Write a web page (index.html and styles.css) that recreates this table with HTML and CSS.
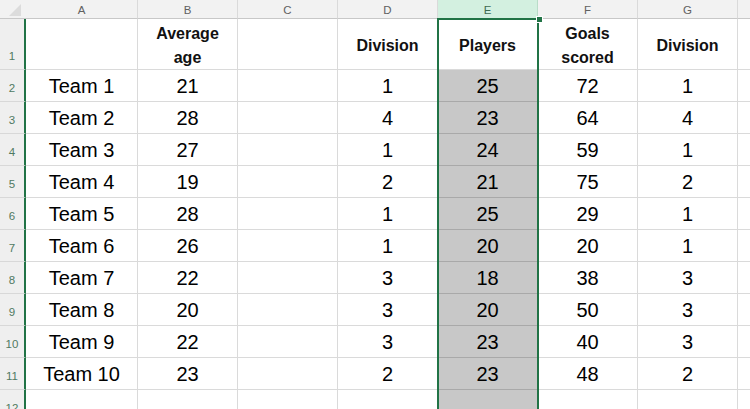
FILE: index.html
```html
<!DOCTYPE html>
<html>
<head>
<meta charset="utf-8">
<link rel="stylesheet" href="styles.css">
</head>
<body>
<div class="sheet">
  <div class="corner"><svg width="26" height="19" viewBox="0 0 26 19"><polygon points="21,4 21,16 9,16" fill="#dcdcdc"/></svg></div>
  <div class="colhead">A</div>
  <div class="colhead">B</div>
  <div class="colhead">C</div>
  <div class="colhead">D</div>
  <div class="colhead sel">E</div>
  <div class="colhead">F</div>
  <div class="colhead">G</div>
  <div class="colhead last"></div>

  <div class="rowhead">1</div>
  <div class="cell"></div>
  <div class="cell hdr"><span>Average<br>age</span></div>
  <div class="cell"></div>
  <div class="cell hdr">Division</div>
  <div class="cell hdr active">Players</div>
  <div class="cell hdr"><span>Goals<br>scored</span></div>
  <div class="cell hdr">Division</div>
  <div class="cell last"></div>

  <div class="rowhead">2</div><div class="cell">Team 1</div><div class="cell">21</div><div class="cell"></div><div class="cell">1</div><div class="cell e">25</div><div class="cell">72</div><div class="cell">1</div><div class="cell last"></div>
  <div class="rowhead">3</div><div class="cell">Team 2</div><div class="cell">28</div><div class="cell"></div><div class="cell">4</div><div class="cell e">23</div><div class="cell">64</div><div class="cell">4</div><div class="cell last"></div>
  <div class="rowhead">4</div><div class="cell">Team 3</div><div class="cell">27</div><div class="cell"></div><div class="cell">1</div><div class="cell e">24</div><div class="cell">59</div><div class="cell">1</div><div class="cell last"></div>
  <div class="rowhead">5</div><div class="cell">Team 4</div><div class="cell">19</div><div class="cell"></div><div class="cell">2</div><div class="cell e">21</div><div class="cell">75</div><div class="cell">2</div><div class="cell last"></div>
  <div class="rowhead">6</div><div class="cell">Team 5</div><div class="cell">28</div><div class="cell"></div><div class="cell">1</div><div class="cell e">25</div><div class="cell">29</div><div class="cell">1</div><div class="cell last"></div>
  <div class="rowhead">7</div><div class="cell">Team 6</div><div class="cell">26</div><div class="cell"></div><div class="cell">1</div><div class="cell e">20</div><div class="cell">20</div><div class="cell">1</div><div class="cell last"></div>
  <div class="rowhead">8</div><div class="cell">Team 7</div><div class="cell">22</div><div class="cell"></div><div class="cell">3</div><div class="cell e">18</div><div class="cell">38</div><div class="cell">3</div><div class="cell last"></div>
  <div class="rowhead">9</div><div class="cell">Team 8</div><div class="cell">20</div><div class="cell"></div><div class="cell">3</div><div class="cell e">20</div><div class="cell">50</div><div class="cell">3</div><div class="cell last"></div>
  <div class="rowhead">10</div><div class="cell">Team 9</div><div class="cell">22</div><div class="cell"></div><div class="cell">3</div><div class="cell e">23</div><div class="cell">40</div><div class="cell">3</div><div class="cell last"></div>
  <div class="rowhead">11</div><div class="cell">Team 10</div><div class="cell">23</div><div class="cell"></div><div class="cell">2</div><div class="cell e">23</div><div class="cell">48</div><div class="cell">2</div><div class="cell last"></div>
  <div class="rowhead">12</div><div class="cell"></div><div class="cell"></div><div class="cell"></div><div class="cell"></div><div class="cell e"></div><div class="cell"></div><div class="cell"></div><div class="cell last"></div>

  <div class="selbox"></div>
  <div class="handle"></div>
</div>
</body>
</html>
```
FILE: styles.css
```css
html, body {
  margin: 0;
  padding: 0;
  background: #ffffff;
  overflow: hidden;
}

.sheet {
  position: relative;
  display: grid;
  grid-template-columns: 26px 112px repeat(6, 100px) 12px;
  grid-template-rows: 19px 51px repeat(11, 32px);
  width: 750px;
  height: 409px;
  overflow: hidden;
  font-family: "Liberation Sans", Arial, sans-serif;
}

.corner {
  background: #f2f2f2;
  border-bottom: 1px solid #c8c8c8;
  box-sizing: border-box;
}
.corner svg { display: block; }

.colhead {
  box-sizing: border-box;
  background: #f2f2f2;
  border-right: 1px solid #dadada;
  border-bottom: 1px solid #c8c8c8;
  display: flex;
  align-items: center;
  justify-content: center;
  font-size: 11.5px;
  color: #616161;
  padding-top: 1px;
}
.colhead.sel {
  background: #d3f0e0;
  color: #3d6b52;
  border-right-color: #b9dcc8;
}
.colhead.last { border-right: none; }

.rowhead {
  box-sizing: border-box;
  background: #efefef;
  border-right: 2px solid #217346;
  border-bottom: 1px solid #d8d8d8;
  display: flex;
  align-items: flex-end;
  justify-content: center;
  font-size: 11.5px;
  color: #4f7a62;
  padding-bottom: 6px;
  line-height: 13px;
}

.cell {
  box-sizing: border-box;
  border-right: 1px solid #dadada;
  border-bottom: 1px solid #dadada;
  display: flex;
  align-items: center;
  justify-content: center;
  font-size: 20px;
  color: #000000;
  white-space: nowrap;
  padding-top: 1px;
}
.cell.last { border-right: none; }

.cell.hdr {
  font-weight: bold;
  font-size: 16px;
  line-height: 24px;
  text-align: center;
  color: #111111;
  padding-top: 4px;
}

.cell.e {
  background: #c8c8c8;
  border-bottom-color: #a9a9a9;
  border-right-color: #a9a9a9;
}
.cell.active { background: #ffffff; }

.selbox {
  position: absolute;
  left: 437px;
  top: 18px;
  width: 102px;
  height: 420px;
  box-sizing: border-box;
  border: 2px solid #217346;
  pointer-events: none;
}

.handle {
  position: absolute;
  left: 536px;
  top: 16px;
  width: 5px;
  height: 5px;
  background: #217346;
  border: 1px solid #ffffff;
}
```
